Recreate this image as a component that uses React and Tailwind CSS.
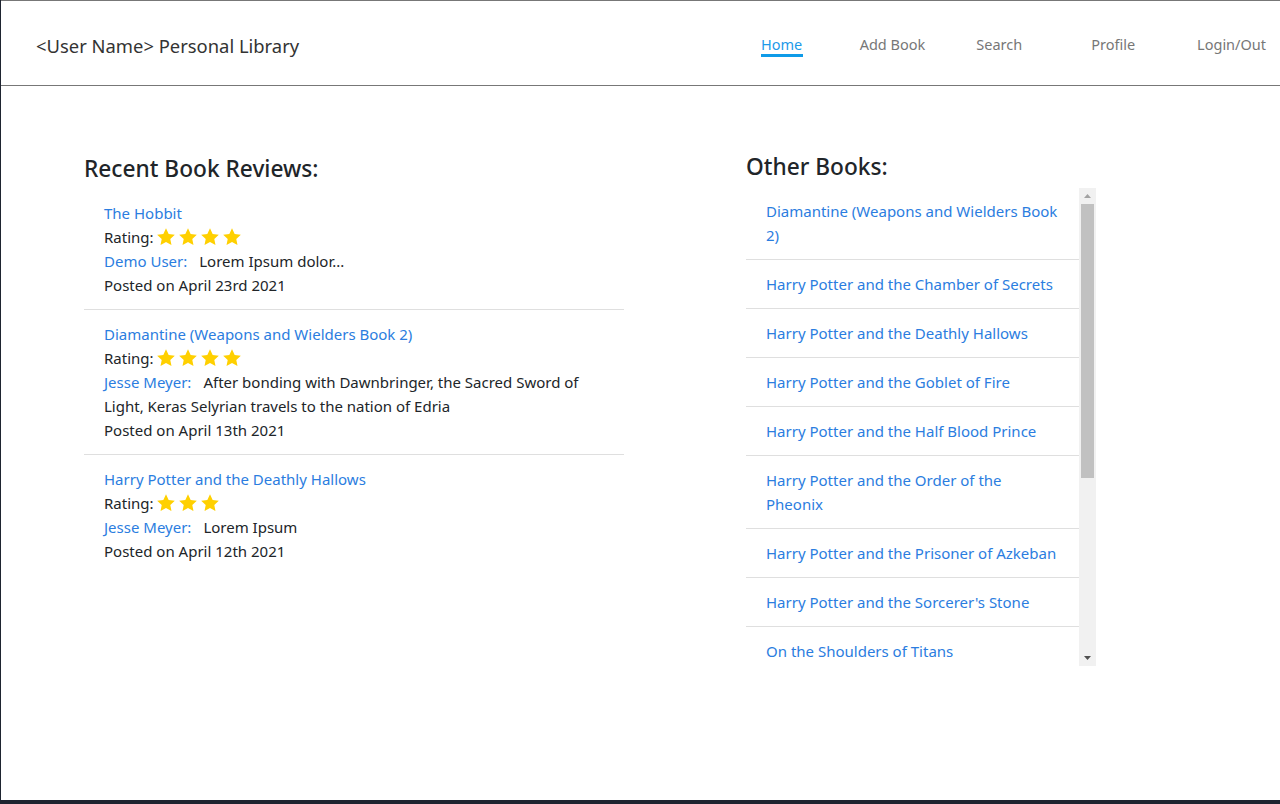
const reviews = [
  {
    titulo: "The Hobbit",
    estrelas: 4,
    usuario: "Demo User:",
    texto: ["Lorem Ipsum dolor..."],
    data: "Posted on April 23rd 2021",
  },
  {
    titulo: "Diamantine (Weapons and Wielders Book 2)",
    estrelas: 4,
    usuario: "Jesse Meyer:",
    texto: [
      "After bonding with Dawnbringer, the Sacred Sword of",
      "Light, Keras Selyrian travels to the nation of Edria",
    ],
    data: "Posted on April 13th 2021",
  },
  {
    titulo: "Harry Potter and the Deathly Hallows",
    estrelas: 3,
    usuario: "Jesse Meyer:",
    texto: ["Lorem Ipsum"],
    data: "Posted on April 12th 2021",
  },
];

const livros = [
  ["Diamantine (Weapons and Wielders Book", "2)"],
  ["Harry Potter and the Chamber of Secrets"],
  ["Harry Potter and the Deathly Hallows"],
  ["Harry Potter and the Goblet of Fire"],
  ["Harry Potter and the Half Blood Prince"],
  ["Harry Potter and the Order of the", "Pheonix"],
  ["Harry Potter and the Prisoner of Azkeban"],
  ["Harry Potter and the Sorcerer's Stone"],
  ["On the Shoulders of Titans"],
  ["The Hobbit"],
];

function Estrela() {
  return (
    <svg width="18" height="18" viewBox="1.5 1.5 21 21" className="inline-block">
      <path
        d="M12 1.8l3.1 6.6 7.2.9-5.3 5 1.4 7.1L12 17.9l-6.4 3.5 1.4-7.1-5.3-5 7.2-.9z"
        fill="#ffd000"
      />
    </svg>
  );
}

export default function App() {
  const nav = [
    { nome: "Home", ml: "" },
    { nome: "Add Book", ml: "ml-[57px]" },
    { nome: "Search", ml: "ml-[51px]" },
    { nome: "Profile", ml: "ml-[69px]" },
    { nome: "Login/Out", ml: "ml-[62px]" },
  ];

  return (
    <div
      className="h-[804px] bg-[#1e2430] flex flex-col"
      style={{ fontFamily: "'Noto Sans', 'Open Sans', sans-serif" }}
    >
      <div className="h-[800px] bg-white border-l border-[#1e2430] text-[#212529]">
        {/* Cabeçalho */}
        <header className="h-[86px] border-t border-b border-[#777] flex items-center justify-between">
          <h1 className="ml-[35px] text-[18.4px] text-[#333] mt-[5px]">
            &lt;User Name&gt; Personal Library
          </h1>
          <nav className="flex items-start mr-[14px] mt-[4px]">
            {nav.map((n, i) => (
              <div key={n.nome} className={`${n.ml} flex flex-col items-center`}>
                <span
                  className={`text-[14.5px] leading-[20px] whitespace-nowrap ${
                    i === 0 ? "text-[#1c9ae9]" : "text-[#777]"
                  }`}
                >
                  {n.nome}
                </span>
                {i === 0 && <span className="h-[3px] w-[42px] bg-[#0f9be8]" />}
              </div>
            ))}
          </nav>
        </header>

        <main className="flex pl-[83px]">
          {/* Resenhas recentes */}
          <section className="w-[540px] pt-[68px]">
            <h2 className="text-[22.7px] font-medium leading-[29px] mb-[6px]">
              Recent Book Reviews:
            </h2>
            <div>
              {reviews.map((r, i) => (
                <div
                  key={r.titulo}
                  className={`px-5 py-3 text-[15px] leading-[24px] whitespace-nowrap ${
                    i < reviews.length - 1 ? "border-b border-[#dfdfdf]" : ""
                  }`}
                >
                  <div className="text-[#2b7de0]">{r.titulo}</div>
                  <div className="flex items-center">
                    <span>Rating:</span>
                    <span className="ml-[3px] flex gap-[4px]">
                      {Array.from({ length: r.estrelas }).map((_, k) => (
                        <Estrela key={k} />
                      ))}
                    </span>
                  </div>
                  <div>
                    <span className="text-[#2b7de0]">{r.usuario}</span>
                    <span className="ml-3">{r.texto[0]}</span>
                    {r.texto[1] && (
                      <>
                        <br />
                        {r.texto[1]}
                      </>
                    )}
                  </div>
                  <div>{r.data}</div>
                </div>
              ))}
            </div>
          </section>

          {/* Outros livros */}
          <section className="ml-[122px] w-[350px] pt-[66px]">
            <h2 className="text-[22.7px] font-medium leading-[29px] mb-[7px]">Other Books:</h2>
            <div className="flex h-[478px]">
              <div className="flex-1 overflow-hidden">
                {livros.map((l, i) => (
                  <div
                    key={l[0]}
                    className={`px-5 pb-3 border-b border-[#dfdfdf] text-[15px] leading-[24px] whitespace-nowrap text-[#2b7de0] ${
                      i === 0 ? "pt-[11px]" : "pt-3"
                    }`}
                  >
                    {l[0]}
                    {l[1] && (
                      <>
                        <br />
                        {l[1]}
                      </>
                    )}
                  </div>
                ))}
              </div>
              {/* barra de rolagem */}
              <div className="w-[17px] bg-[#f1f1f1] flex flex-col items-center">
                <div className="h-[16px] flex items-center justify-center">
                  <svg width="7" height="4" viewBox="0 0 7 4">
                    <path d="M3.5 0L7 4H0z" fill="#a3a3a3" />
                  </svg>
                </div>
                <div className="w-[13px] h-[274px] bg-[#c1c1c1]" />
                <div className="flex-1" />
                <div className="h-[16px] flex items-center justify-center">
                  <svg width="7" height="4" viewBox="0 0 7 4">
                    <path d="M0 0h7L3.5 4z" fill="#505050" />
                  </svg>
                </div>
              </div>
            </div>
          </section>
        </main>
      </div>
    </div>
  );
}
